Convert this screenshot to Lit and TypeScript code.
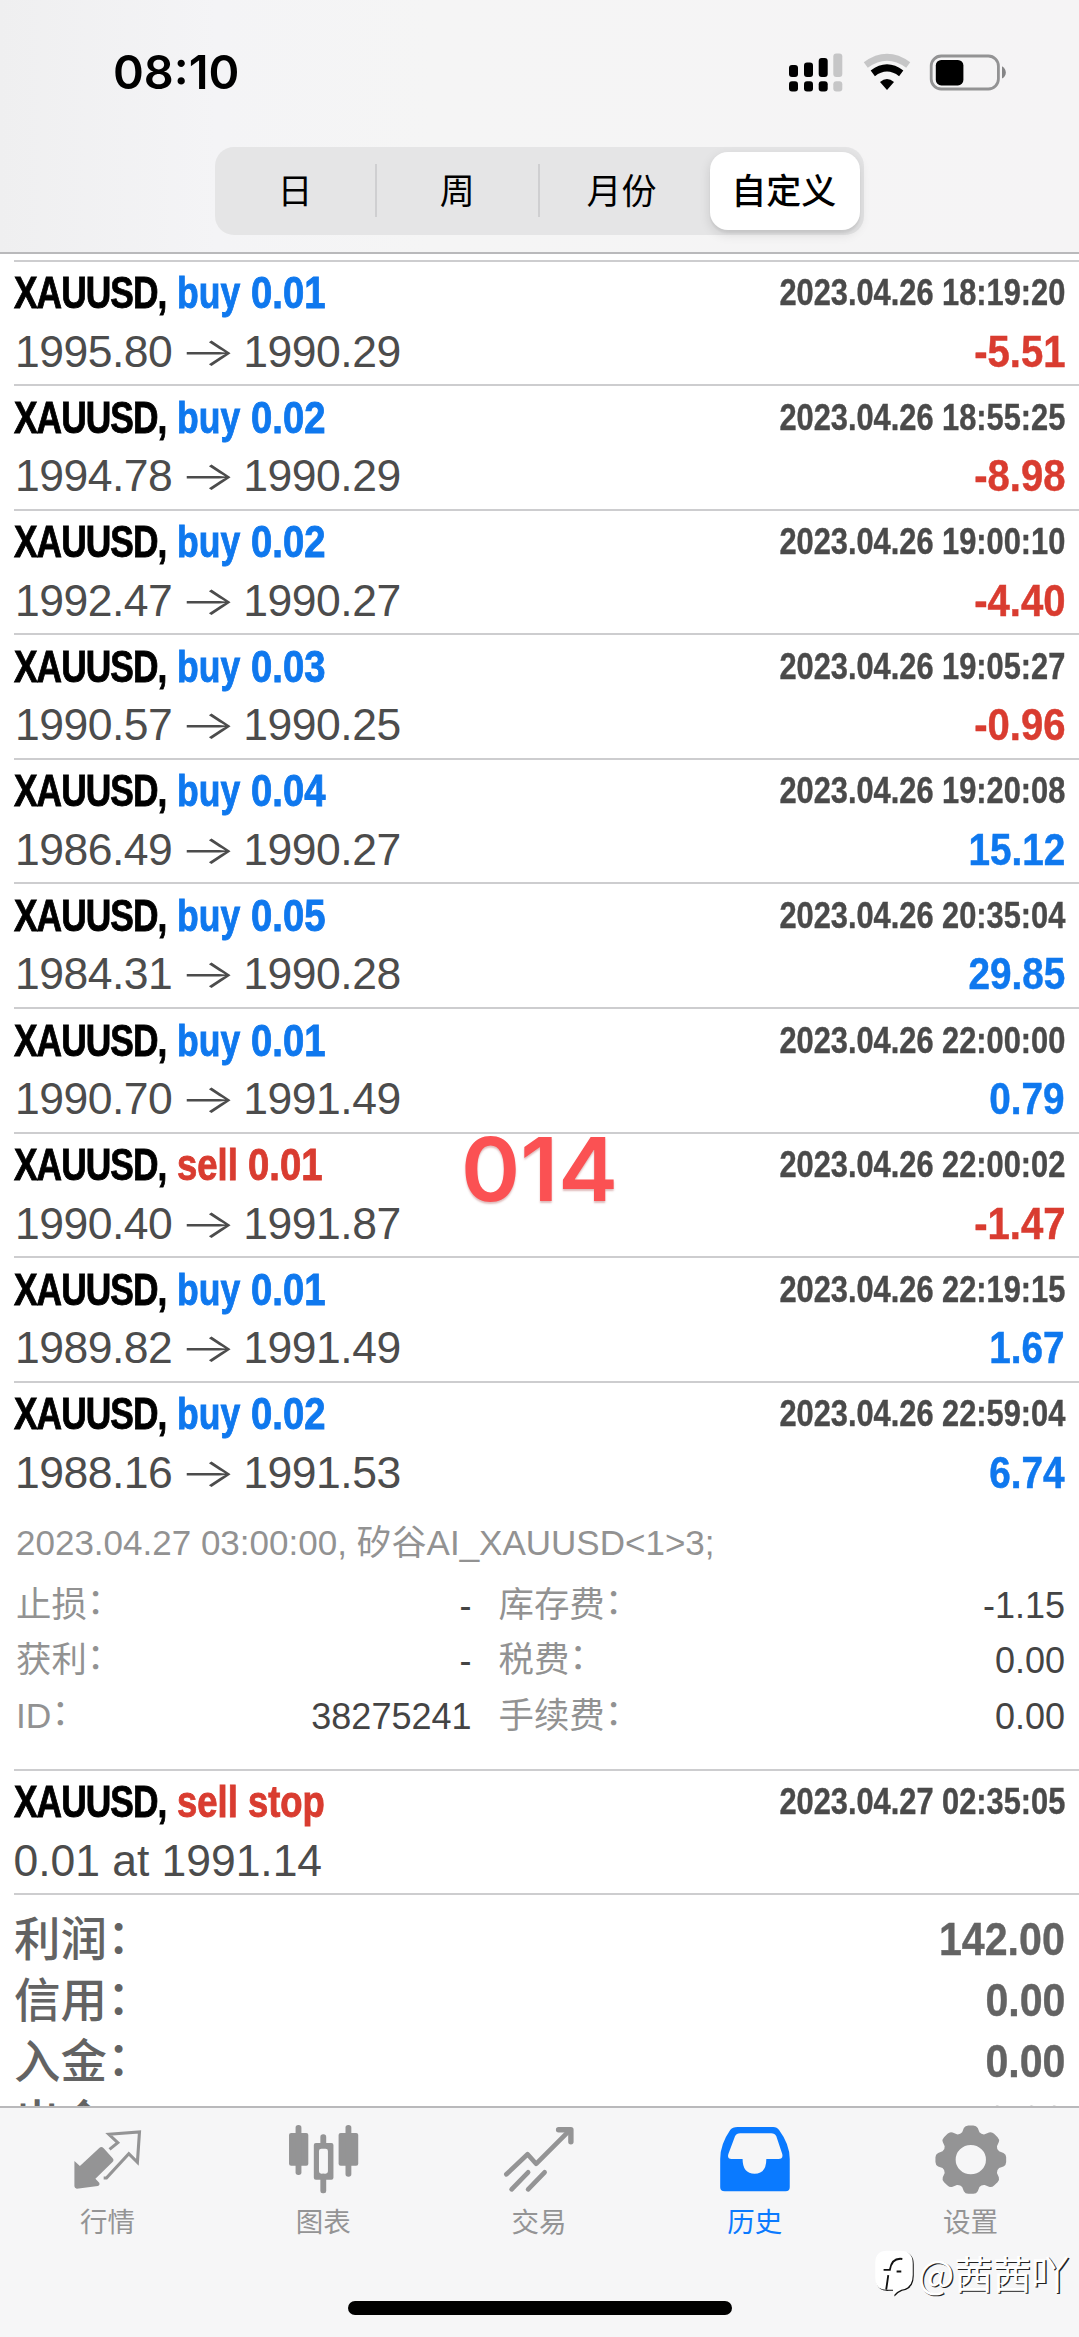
import { LitElement, html, svg, css } from "lit";
import { customElement, property } from "lit/decorators.js";

type Side = "buy" | "sell";

interface Deal {
  side: Side;
  volume: string;
  open: string;
  close: string;
  time: string;
  profit: string;
}

const deals: Deal[] = [
  { side: "buy", volume: "0.01", open: "1995.80", close: "1990.29", time: "2023.04.26 18:19:20", profit: "-5.51" },
  { side: "buy", volume: "0.02", open: "1994.78", close: "1990.29", time: "2023.04.26 18:55:25", profit: "-8.98" },
  { side: "buy", volume: "0.02", open: "1992.47", close: "1990.27", time: "2023.04.26 19:00:10", profit: "-4.40" },
  { side: "buy", volume: "0.03", open: "1990.57", close: "1990.25", time: "2023.04.26 19:05:27", profit: "-0.96" },
  { side: "buy", volume: "0.04", open: "1986.49", close: "1990.27", time: "2023.04.26 19:20:08", profit: "15.12" },
  { side: "buy", volume: "0.05", open: "1984.31", close: "1990.28", time: "2023.04.26 20:35:04", profit: "29.85" },
  { side: "buy", volume: "0.01", open: "1990.70", close: "1991.49", time: "2023.04.26 22:00:00", profit: "0.79" },
  { side: "sell", volume: "0.01", open: "1990.40", close: "1991.87", time: "2023.04.26 22:00:02", profit: "-1.47" },
  { side: "buy", volume: "0.01", open: "1989.82", close: "1991.49", time: "2023.04.26 22:19:15", profit: "1.67" },
  { side: "buy", volume: "0.02", open: "1988.16", close: "1991.53", time: "2023.04.26 22:59:04", profit: "6.74" },
];

const details = [
  ["止损", "-", "库存费", "-1.15"],
  ["获利", "-", "税费", "0.00"],
  ["ID", "38275241", "手续费", "0.00"],
];

const totals = [
  ["利润", "142.00"],
  ["信用", "0.00"],
  ["入金", "0.00"],
  ["出金", "0.00"],
];

@customElement("status-bar")
export class StatusBar extends LitElement {
  static styles = css`
    :host {
      display: flex;
      justify-content: space-between;
      align-items: center;
      box-sizing: border-box;
      height: 143px;
      padding: 0 73px 0 113px;
    }
    .clock {
      font: 600 47px/56px Inter, sans-serif;
      color: #000;
      transform-origin: left;
      transform: scaleX(0.995);
    }
    .icons {
      display: block;
      width: 220px;
      height: 42px;
    }
  `;
  render() {
    const bars = [
      { x: 3, top: 14, c: "#000" },
      { x: 18, top: 11.5, c: "#000" },
      { x: 32.7, top: 7, c: "#000" },
      { x: 47.3, top: 2.5, c: "#c6c6c7" },
    ];
    return html`
      <div class="clock">08:10</div>
      <svg class="icons" viewBox="0 0 220 42">
        ${bars.map(
          (b) => svg`
            <rect x=${b.x} y=${b.top} width="9" height=${26 - b.top} rx="3" fill=${b.c} />
            <rect x=${b.x} y="30.2" width="9" height="10.4" rx="3" fill=${b.c} />`
        )}
        <path d="M79.8 14 Q101 -1.5 122.2 14" fill="none" stroke="#c6c6c7" stroke-width="6.8" />
        <path d="M86.8 22.4 Q101 11.5 115.2 22.4" fill="none" stroke="#000" stroke-width="7" />
        <path d="M94 31 Q101 25 108 31 L101 39 Z" fill="#000" />
        <rect x="145.2" y="5" width="67.2" height="33" rx="10" fill="none" stroke="#939394" stroke-width="2.8" />
        <rect x="149.8" y="9" width="27.6" height="25.4" rx="5.5" fill="#000" />
        <path d="M216 15.2 Q219.8 17.5 219.8 21.5 Q219.8 25.5 216 27.6 Z" fill="#858586" />
      </svg>
    `;
  }
}

@customElement("period-tabs")
export class PeriodTabs extends LitElement {
  static styles = css`
    :host {
      display: grid;
      grid-template-columns: repeat(4, 1fr);
      box-sizing: border-box;
      width: 649px;
      height: 88px;
      margin: 4px auto 0;
      border-radius: 19px;
      background: #e5e5e6;
      font: 400 35px/1 "Noto Sans CJK SC", sans-serif;
      color: #000;
    }
    .seg {
      display: flex;
      align-items: center;
      justify-content: center;
      margin: 17px 0 18px;
      padding-bottom: 4px;
      border-right: 2px solid transparent;
    }
    .seg.ruled {
      border-right-color: #cfcfd1;
    }
    .seg.month {
      padding-left: 4px;
    }
    .seg.selected {
      margin: 5px 4px 5px 8px;
      padding-right: 2px;
      padding-bottom: 5px;
      border: 0;
      border-radius: 18px;
      background: #fff;
      font-weight: 500;
      box-shadow: 0 4px 12px rgba(0, 0, 0, 0.12), 0 3px 2px rgba(0, 0, 0, 0.05);
    }
  `;
  render() {
    return html`
      <div class="seg ruled">日</div>
      <div class="seg ruled">周</div>
      <div class="seg month">月份</div>
      <div class="seg selected">自定义</div>
    `;
  }
}

const rowStyles = css`
  :host {
    display: block;
    font-family: "Liberation Sans", Arial, "Noto Sans CJK SC", sans-serif;
  }
  .head,
  .body {
    display: flex;
    justify-content: space-between;
    white-space: pre;
  }
  .head {
    padding-top: 5.5px;
    height: 58px;
    line-height: 52px;
    box-sizing: border-box;
    font-weight: 700;
    font-size: 45px;
  }
  .title {
    display: flex;
  }
  .symbol,
  .side,
  .volume {
    transform-origin: left;
    -webkit-text-stroke: 0.9px currentColor;
  }
  .symbol {
    width: 163px;
    color: #000;
    letter-spacing: -1.2px;
    transform: scaleX(0.785);
  }
  .side {
    width: 74px;
    transform: scaleX(0.79);
  }
  .side.sell {
    width: 71px;
    transform: scaleX(0.81);
  }
  .volume {
    transform: scaleX(0.85);
  }
  .time {
    transform-origin: right;
    transform: scaleX(0.855);
    font-size: 36px;
    color: #4a4a4a;
    -webkit-text-stroke: 0.4px currentColor;
  }
  .body {
    padding: 5px 0 0 1px;
    height: 58px;
    line-height: 54px;
    font-size: 44.5px;
    color: #4c4c4c;
  }
  .prices {
    display: flex;
    letter-spacing: -0.5px;
  }
  .prices.order {
    margin-left: -1.5px;
    letter-spacing: -0.05px;
  }
  .arrow {
    width: 71px;
    text-align: center;
    font-family: Inter, sans-serif;
    font-weight: 300;
    font-size: 40px;
    transform: scaleX(1.5);
  }
  .profit {
    font-weight: 700;
    transform-origin: right;
    transform: scaleX(0.9);
    -webkit-text-stroke: 0.5px currentColor;
  }
  .profit.buy {
    transform: scaleX(0.87);
  }
  .buy {
    color: #0f78ee;
  }
  .sell {
    color: #d93c30;
  }
`;

@customElement("deal-row")
export class DealRow extends LitElement {
  @property({ attribute: false }) deal!: Deal;
  static styles = rowStyles;
  render() {
    const d = this.deal;
    return html`
      <div class="head">
        <div class="title"><span class="symbol">XAUUSD,</span><span class="side ${d.side}">${d.side}</span><span class="volume ${d.side}">${d.volume}</span></div>
        <div class="time">${d.time}</div>
      </div>
      <div class="body">
        <div class="prices"><span>${d.open}</span><span class="arrow">→</span><span>${d.close}</span></div>
        <div class="profit ${d.profit.startsWith("-") ? "sell" : "buy"}">${d.profit}</div>
      </div>
    `;
  }
}

@customElement("pending-row")
export class PendingRow extends LitElement {
  static styles = rowStyles;
  render() {
    return html`
      <div class="head">
        <div class="title"><span class="symbol">XAUUSD,</span><span class="side sell">sell stop</span></div>
        <div class="time">2023.04.27 02:35:05</div>
      </div>
      <div class="body"><div class="prices order">0.01 at 1991.14</div></div>
    `;
  }
}

const tabIcons = {
  quotes: svg`
    <path d="M215 212 L231 227 L288 172 Q294 168 300 174 L325 202 Q332 209 325 216 L276 265 L287 277 Q290 284 283 287 L222 295 Q215 294 215 288 Z" fill="currentColor"/>
    <path d="M317 177 L341 157 L315 132 L404 125 L398 216 L373 190 L308 263 H300" fill="none" stroke="currentColor" stroke-width="9"/>`,
  chart: svg`
    <g fill="currentColor">
      <rect x="839" y="128" width="56" height="98" rx="6"/><rect x="858" y="104" width="17" height="150" rx="8"/>
      <rect x="983" y="128" width="57" height="98" rx="6"/><rect x="1003" y="104" width="17" height="155" rx="8"/>
      <rect x="930" y="132" width="17" height="40" rx="8"/><rect x="930" y="250" width="17" height="59" rx="7"/>
      <path fill-rule="evenodd" d="M917 158 H962 Q968 158 968 164 V262 Q968 268 962 268 H917 Q911 268 911 262 V164 Q911 158 917 158 Z M933 175 Q926 175 926 182 V243 Q926 250 933 250 H945 Q952 250 952 243 V182 Q952 175 945 175 Z"/>
    </g>`,
  trade: svg`
    <g fill="none" stroke="currentColor" stroke-width="4.7" stroke-linecap="round" stroke-linejoin="round">
      <path d="M506.8 2174 L528 2154 L536.5 2163.5 L570 2130"/>
      <path d="M559 2129.5 H571.3 V2141.5" stroke-width="5.4"/>
      <path d="M512 2189 L528.5 2172 M528.5 2189 L545 2172"/>
    </g>`,
  history: svg`
    <path fill="currentColor" fill-rule="evenodd" d="M575 110 H678 Q689 110 695 119 Q726 162 726 206 V291 Q726 303 714 303 H537 Q524 303 524 291 V206 Q524 162 553 119 Q559 110 575 110 Z M582 129 Q571 129 567 138 L548 190 Q543 206 557 206 H589 Q589 250 624 250 Q658 250 658 206 H693 Q708 206 704 190 L687 138 Q683 129 672 129 Z"/>`,
  settings: svg`
    <path fill="currentColor" fill-rule="evenodd" d="${gearPath(1253, 208, 103, 86, 44)}"/>`,
};

/** Eight rounded lobes around a round hole. */
function gearPath(cx: number, cy: number, outer: number, inner: number, hole: number): string {
  const at = (r: number, deg: number) => {
    const a = (deg * Math.PI) / 180;
    return `${(cx + r * Math.cos(a)).toFixed(1)} ${(cy + r * Math.sin(a)).toFixed(1)}`;
  };
  let d = "";
  for (let i = 0; i < 8; i++) {
    const c = i * 45;
    d += `${i ? "L" : "M"}${at(inner, c - 17)} L${at(outer - 6, c - 12)} Q${at(outer + 1, c - 9)} ${at(outer, c - 4)} L${at(outer, c + 4)} Q${at(outer + 1, c + 9)} ${at(outer - 6, c + 12)} L${at(inner, c + 17)} Q${at(inner - 5, c + 22.5)} ${at(inner, c + 28)} `;
  }
  return `${d}Z M${cx - hole} ${cy} a${hole} ${hole} 0 1 0 ${hole * 2} 0 a${hole} ${hole} 0 1 0 ${-hole * 2} 0 Z`;
}

@customElement("tab-bar")
export class TabBar extends LitElement {
  static styles = css`
    :host {
      display: flex;
      flex-direction: column;
      align-items: center;
      box-sizing: border-box;
      height: 231px;
      border-top: 2px solid #b9b9bb;
      background: #f6f6f7;
    }
    .tabs {
      display: grid;
      grid-template-columns: repeat(5, 1fr);
      width: 100%;
      height: 193px;
    }
    .tab {
      display: flex;
      flex-direction: column;
      align-items: center;
      padding-top: 14px;
      color: #949495;
      font: 400 27.5px/40px "Noto Sans CJK SC", sans-serif;
    }
    .tab.active {
      color: #0a7aff;
    }
    .icon {
      display: block;
      width: 72.3px;
      height: 73.3px;
      margin-bottom: 5px;
    }
    .label {
      margin-right: 1px;
    }
    .home {
      width: 384px;
      height: 14px;
      border-radius: 7px;
      background: #000;
    }
  `;
  render() {
    const tabs = [
      { label: "行情", icon: tabIcons.quotes, box: "208 95 210 220" },
      { label: "图表", icon: tabIcons.chart, box: "836 95 210 220" },
      { label: "交易", icon: tabIcons.trade, box: "503.4 2121.7 72.3 73.3" },
      { label: "历史", icon: tabIcons.history, box: "520.5 95 210 220", active: true },
      { label: "设置", icon: tabIcons.settings, box: "1149 95 210 220" },
    ];
    return html`
      <div class="tabs">
        ${tabs.map(
          (t) => html`<div class="tab ${t.active ? "active" : ""}">
            <svg class="icon" viewBox=${t.box} preserveAspectRatio="none">${t.icon}</svg>
            <span class="label">${t.label}</span>
          </div>`
        )}
      </div>
      <div class="home"></div>
    `;
  }
}

@customElement("app-root")
export class AppRoot extends LitElement {
  static styles = css`
    :host {
      display: flex;
      flex-direction: column;
      position: relative;
      width: 1079px;
      height: 2337px;
      overflow: hidden;
      background: #fff;
      font-family: "Liberation Sans", Arial, "Noto Sans CJK SC", sans-serif;
    }
    .top {
      flex: none;
      box-sizing: border-box;
      height: 253.5px;
      border-bottom: 2px solid #b9b9bb;
      background: linear-gradient(90deg, #efeff0 0, #f4f4f6 20%, #f5f5f5 40%, #f5f4f5 100%);
    }
    .list {
      flex: 1;
      min-height: 0;
      overflow: hidden;
      padding: 6px 0 0 14px;
    }
    .item {
      box-sizing: border-box;
      height: 124.6px;
      padding-right: 14px;
      border-top: 2px solid #cdcdcf;
    }
    .item.open {
      height: 387.8px;
    }
    .comment,
    .grid {
      color: #929292;
      white-space: pre;
    }
    .comment {
      margin: 9px 0 0 2px;
      font-size: 35px;
      line-height: 60px;
    }
    .grid {
      display: grid;
      grid-template-columns: 200px 255.5px 211px 1fr;
      grid-auto-rows: 55.4px;
      align-items: center;
      margin: 5px 0 0 2px;
      font-size: 35.4px;
      line-height: 55px;
    }
    .value {
      color: #444;
      font-size: 36px;
      text-align: right;
    }
    .label.second {
      padding-left: 27px;
    }
    .colon {
      display: inline-block;
      transform: translate(0, -3px);
    }
    .totals {
      padding: 13.5px 14px 0 0;
      border-top: 2px solid #cdcdcf;
      color: #636363;
    }
    .total {
      display: flex;
      justify-content: space-between;
      height: 61px;
      line-height: 60px;
      font-size: 47px;
      font-weight: 700;
    }
    .name {
      font-family: "Noto Sans CJK SC", sans-serif;
      font-weight: 500;
      font-size: 46.5px;
      line-height: 54px;
    }
    .sum {
      transform-origin: right;
      transform: scaleX(0.875);
      -webkit-text-stroke: 0.4px currentColor;
    }
    .stamp {
      position: absolute;
      left: 461px;
      top: 1115px;
      font: 600 88px/108px Inter, sans-serif;
      color: #fb5153;
      transform-origin: left;
      transform: scaleX(1.02);
      text-shadow: 0 2px 2px rgba(160, 60, 60, 0.35);
    }
    .credit {
      position: absolute;
      left: 873px;
      top: 2246px;
      display: flex;
      align-items: center;
      gap: 3px;
      font: 400 38.4px/52px "Noto Sans CJK SC", sans-serif;
      color: #fff;
      text-shadow: 1.3px 1.3px 0.4px #222;
    }
    .mark {
      width: 42px;
      height: 50px;
      filter: drop-shadow(1.4px 1.4px 0.2px #111);
    }
  `;

  render() {
    return html`
      <div class="top">
        <status-bar></status-bar>
        <period-tabs></period-tabs>
      </div>
      <div class="list">
        ${deals.map((d, i) => {
          const open = i === deals.length - 1;
          return html`<div class="item ${open ? "open" : ""}">
            <deal-row .deal=${d}></deal-row>
            ${open ? this.renderDetails() : null}
          </div>`;
        })}
        <div class="item"><pending-row></pending-row></div>
        <div class="totals">
          ${totals.map(
            ([name, sum]) =>
              html`<div class="total">
                <span class="name">${name}${this.colon()}</span><span class="sum">${sum}</span>
              </div>`
          )}
        </div>
      </div>
      <tab-bar></tab-bar>
      <div class="stamp">014</div>
      <div class="credit">
        <svg class="mark" viewBox="0 0 40 48">
          <path d="M13 3.5 H26 Q38 3.5 38 15.5 V27 Q38 39.5 27 41 Q22 43 19.5 46.5 L19 41 H12 Q2 41 2 29 V15.5 Q2 3.5 13 3.5 Z" fill="#fff" />
          <path d="M28 11.5 Q18 10 16 22 H10 M22.5 23.5 H27 M14.5 27 L12.5 41" fill="none" stroke="#111" stroke-width="1.8" />
        </svg>
        <span>@茜茜吖</span>
      </div>
    `;
  }

  /** The full-width colon, raised to the middle of the ideographs. */
  private colon() {
    return html`<span class="colon">：</span>`;
  }

  private renderDetails() {
    return html`
      <div class="comment">2023.04.27 03:00:00, 矽谷AI_XAUUSD&lt;1&gt;3;</div>
      <div class="grid">
        ${details.map(
          ([a, b, c, d]) => html`
            <span class="label">${a}${this.colon()}</span><span class="value">${b}</span>
            <span class="label second">${c}${this.colon()}</span><span class="value">${d}</span>
          `
        )}
      </div>
    `;
  }
}
